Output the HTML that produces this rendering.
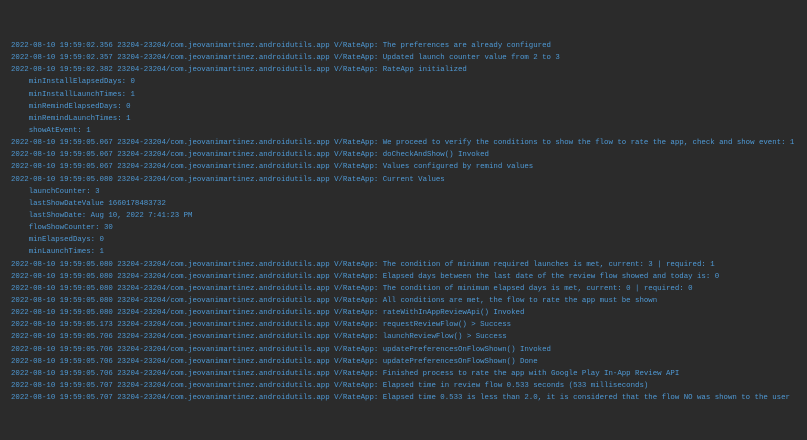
<!DOCTYPE html>
<html><head><meta charset="utf-8"><style>
html,body{margin:0;padding:0;background:#2b2b2b;width:807px;height:440px;overflow:hidden}
pre{margin:0;position:absolute;left:11px;top:40px;font-family:"Liberation Mono",monospace;font-size:7.39px;line-height:12.14px;color:#4f9ad6;white-space:pre}
</style></head><body>
<pre>2022-08-10 19:59:02.356 23204-23204/com.jeovanimartinez.androidutils.app V/RateApp: The preferences are already configured
2022-08-10 19:59:02.357 23204-23204/com.jeovanimartinez.androidutils.app V/RateApp: Updated launch counter value from 2 to 3
2022-08-10 19:59:02.382 23204-23204/com.jeovanimartinez.androidutils.app V/RateApp: RateApp initialized
    minInstallElapsedDays: 0
    minInstallLaunchTimes: 1
    minRemindElapsedDays: 0
    minRemindLaunchTimes: 1
    showAtEvent: 1
2022-08-10 19:59:05.067 23204-23204/com.jeovanimartinez.androidutils.app V/RateApp: We proceed to verify the conditions to show the flow to rate the app, check and show event: 1
2022-08-10 19:59:05.067 23204-23204/com.jeovanimartinez.androidutils.app V/RateApp: doCheckAndShow() Invoked
2022-08-10 19:59:05.067 23204-23204/com.jeovanimartinez.androidutils.app V/RateApp: Values configured by remind values
2022-08-10 19:59:05.080 23204-23204/com.jeovanimartinez.androidutils.app V/RateApp: Current Values
    launchCounter: 3
    lastShowDateValue 1660178483732
    lastShowDate: Aug 10, 2022 7:41:23 PM
    flowShowCounter: 30
    minElapsedDays: 0
    minLaunchTimes: 1
2022-08-10 19:59:05.080 23204-23204/com.jeovanimartinez.androidutils.app V/RateApp: The condition of minimum required launches is met, current: 3 | required: 1
2022-08-10 19:59:05.080 23204-23204/com.jeovanimartinez.androidutils.app V/RateApp: Elapsed days between the last date of the review flow showed and today is: 0
2022-08-10 19:59:05.080 23204-23204/com.jeovanimartinez.androidutils.app V/RateApp: The condition of minimum elapsed days is met, current: 0 | required: 0
2022-08-10 19:59:05.080 23204-23204/com.jeovanimartinez.androidutils.app V/RateApp: All conditions are met, the flow to rate the app must be shown
2022-08-10 19:59:05.080 23204-23204/com.jeovanimartinez.androidutils.app V/RateApp: rateWithInAppReviewApi() Invoked
2022-08-10 19:59:05.173 23204-23204/com.jeovanimartinez.androidutils.app V/RateApp: requestReviewFlow() &gt; Success
2022-08-10 19:59:05.706 23204-23204/com.jeovanimartinez.androidutils.app V/RateApp: launchReviewFlow() &gt; Success
2022-08-10 19:59:05.706 23204-23204/com.jeovanimartinez.androidutils.app V/RateApp: updatePreferencesOnFlowShown() Invoked
2022-08-10 19:59:05.706 23204-23204/com.jeovanimartinez.androidutils.app V/RateApp: updatePreferencesOnFlowShown() Done
2022-08-10 19:59:05.706 23204-23204/com.jeovanimartinez.androidutils.app V/RateApp: Finished process to rate the app with Google Play In-App Review API
2022-08-10 19:59:05.707 23204-23204/com.jeovanimartinez.androidutils.app V/RateApp: Elapsed time in review flow 0.533 seconds (533 milliseconds)
2022-08-10 19:59:05.707 23204-23204/com.jeovanimartinez.androidutils.app V/RateApp: Elapsed time 0.533 is less than 2.0, it is considered that the flow NO was shown to the user</pre>
</body></html>
